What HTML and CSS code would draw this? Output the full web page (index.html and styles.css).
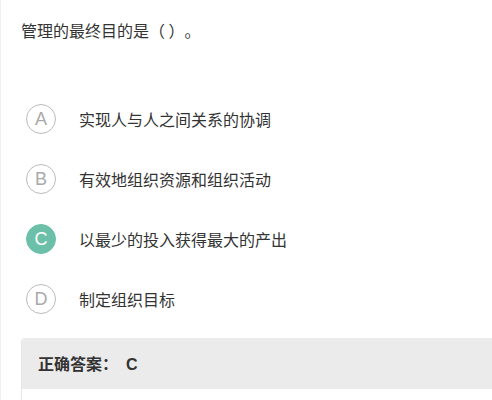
FILE: index.html
```html
<!DOCTYPE html>
<html lang="zh-CN">
<head>
  <meta charset="UTF-8" />
  <meta name="viewport" content="width=device-width, initial-scale=1.0"/>
  <title>单选题</title>
  <link rel="stylesheet" href="styles.css">
</head>
<body>
  <div class="paper">
    <p class="question">管理的最终目的是（ ）。</p>

    <ul class="options">
      <li class="option"><span class="mark">A</span><span class="label">实现人与人之间关系的协调</span></li>
      <li class="option"><span class="mark">B</span><span class="label">有效地组织资源和组织活动</span></li>
      <li class="option chosen"><span class="mark">C</span><span class="label">以最少的投入获得最大的产出</span></li>
      <li class="option"><span class="mark">D</span><span class="label">制定组织目标</span></li>
    </ul>

    <div class="answer">
      <div class="answer-head">正确答案：<span class="key">C</span></div>
      <div class="answer-body"></div>
    </div>
  </div>
</body>
</html>
```

FILE: styles.css
```css
body {
  margin: 0;
  background: #fff;
  color: #333;
  font-family: "Microsoft YaHei", "Noto Sans CJK SC", "Liberation Sans", sans-serif;
  overflow: hidden;
}
.paper {
  border-left: 1px solid #f0f0f0;
  padding: 18px 0 0 20px;
  height: 400px;
  box-sizing: border-box;
  overflow: hidden;
}
.question {
  margin: 0;
  font-size: 16px;
  line-height: 24px;
  text-spacing-trim: space-all;
}
.options {
  list-style: none;
  margin: 47px 0 0;
  padding: 0 0 0 5px;
}
.option {
  display: flex;
  align-items: center;
  height: 60px;
}
.mark {
  width: 28px;
  height: 28px;
  border: 1px solid #bbb;
  border-radius: 50%;
  display: flex;
  align-items: center;
  justify-content: center;
  color: #aaa;
  font-family: "Liberation Sans", Arial, sans-serif;
  font-size: 18px;
  flex-shrink: 0;
}
.option.chosen .mark {
  background: #6cc0a9;
  border-color: #6cc0a9;
  color: #fff;
}
.label {
  margin-left: 23px;
  font-size: 16px;
}
.answer {
  margin-top: 9px;
  margin-right: -20px;
  border-left: 1px solid #e6e6e6;
  border-radius: 4px 0 0 0;
  overflow: hidden;
}
.answer-head {
  background: #ebebeb;
  height: 51px;
  line-height: 51px;
  padding-left: 16px;
  font-size: 16px;
  font-weight: bold;
}
.key {
  margin-left: 8px;
  font-family: "Liberation Sans", Arial, sans-serif;
}
.answer-body {
  height: 11px;
}
```
